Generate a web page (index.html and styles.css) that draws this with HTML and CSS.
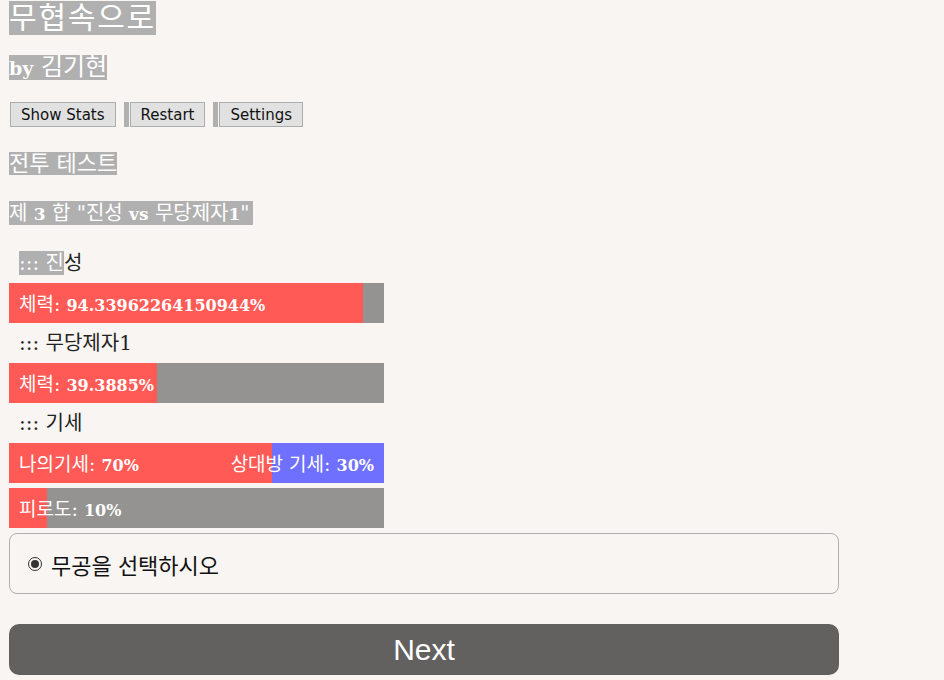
FILE: index.html
```html
<!DOCTYPE html>
<html lang="ko">
<head>
    <meta charset="UTF-8">
    <meta name="viewport" content="width=device-width, initial-scale=1.0">
    <title>무협속으로</title>
    <link rel="stylesheet" href="styles.css">
</head>
<body>
    <div class="game">
        <h1 class="title"><span class="hl">무협속으로</span></h1>
        <h3 class="author"><span class="hl"><b>by</b> 김기현</span></h3>

        <div class="toolbar">
            <button class="tool-btn">Show Stats</button>
            <span class="sep"></span>
            <button class="tool-btn">Restart</button>
            <span class="sep"></span>
            <button class="tool-btn">Settings</button>
        </div>

        <div class="scene"><span class="hl">전투 테스트</span></div>
        <div class="round"><span class="hl">제 <b>3</b> 합 "진성 <b>vs</b> 무당제자<b>1</b>"</span></div>

        <div class="who first"><span class="hl">::: 진</span>성</div>
        <div class="bar">
            <div class="bar-fill red" style="width: 94.34%"></div>
            <div class="bar-label"><span>체력: <b>94.33962264150944%</b></span></div>
        </div>

        <div class="who">::: 무당제자1</div>
        <div class="bar">
            <div class="bar-fill red" style="width: 39.39%"></div>
            <div class="bar-label"><span>체력: <b>39.3885%</b></span></div>
        </div>

        <div class="who">::: 기세</div>
        <div class="bar blue">
            <div class="bar-fill red" style="width: 70%"></div>
            <div class="bar-label"><span>나의기세: <b>70%</b></span><span>상대방 기세: <b>30%</b></span></div>
        </div>
        <div class="bar gap">
            <div class="bar-fill red" style="width: 10%"></div>
            <div class="bar-label"><span>피로도: <b>10%</b></span></div>
        </div>

        <div class="choices">
            <label class="choice"><span class="radio"></span>무공을 선택하시오</label>
        </div>

        <button class="next-btn">Next</button>
    </div>
</body>
</html>
```

FILE: styles.css
```css
body {
    margin: 0;
    padding: 0 9px;
    background-color: #f8f5f2;
    color: #222;
    font-family: "DejaVu Serif", "Noto Sans CJK KR", serif;
}
.game {
    width: 830px;
}
.hl {
    background-color: #b0b0b0;
    color: #fff;
}
.title {
    margin: 0;
    padding-top: 1px;
    font-weight: normal;
    font-size: 30px;
    line-height: 34px;
    height: 34px;
}
.title .hl {
    display: inline-block;
    height: 34px;
    letter-spacing: 1.8px;
}
.author {
    margin: 20px 0 0;
    font-weight: normal;
    font-size: 24px;
    line-height: 25px;
    height: 25px;
}
.author .hl {
    display: inline-block;
    height: 25px;
}
.author b {
    font-size: 19px;
}
.toolbar {
    display: flex;
    align-items: center;
    margin-top: 22px;
    height: 25px;
}
.tool-btn {
    height: 25px;
    margin: 0 0 0 1px;
    padding: 0 10px;
    font-family: "DejaVu Sans", sans-serif;
    font-size: 15px;
    color: #111;
    background: #e1e1e1;
    border: 1px solid #adadad;
    border-radius: 0;
}
.sep {
    display: inline-block;
    width: 5px;
    height: 25px;
    margin-left: 8px;
    background: #b0b0b0;
}
.scene {
    margin-top: 25px;
    font-size: 22px;
    line-height: 23px;
}
.scene .hl {
    display: inline-block;
    height: 23px;
}
.round {
    margin-top: 26px;
    font-size: 20px;
    line-height: 24px;
}
.round .hl {
    display: inline-block;
    height: 24px;
    padding-right: 3px;
}
.round b {
    font-size: 17px;
}
.who {
    height: 40px;
    line-height: 40px;
    padding-left: 10px;
    font-size: 20px;
}
.who.first {
    margin-top: 18px;
}
.bar {
    position: relative;
    width: 375px;
    height: 40px;
    background: #949391;
}
.bar.blue {
    background: #7070ff;
}
.bar.gap {
    margin-top: 5px;
}
.bar-fill {
    height: 100%;
}
.bar-fill.red {
    background: #ff5a55;
}
.bar-label {
    position: absolute;
    inset: 0;
    display: flex;
    align-items: center;
    justify-content: space-between;
    padding: 0 10px 2px;
    color: #fff;
    font-size: 19px;
    white-space: nowrap;
}
.bar-label b {
    font-size: 16px;
}
.choices {
    margin-top: 5px;
    height: 59px;
    border: 1px solid #b0b0b0;
    border-radius: 8px;
    display: flex;
    align-items: center;
    padding-left: 18px;
}
.choice {
    display: flex;
    align-items: center;
    font-family: "Noto Sans CJK KR", sans-serif;
    font-size: 22px;
    color: #111;
}
.radio {
    width: 12px;
    height: 12px;
    border: 1px solid #333;
    border-radius: 50%;
    margin-right: 9px;
    position: relative;
}
.radio::after {
    content: "";
    position: absolute;
    left: 2px;
    top: 2px;
    width: 8px;
    height: 8px;
    border-radius: 50%;
    background: #333;
}
.next-btn {
    display: block;
    width: 830px;
    height: 51px;
    margin-top: 30px;
    border: none;
    border-radius: 10px;
    background: #63615f;
    color: #fff;
    font-family: "Liberation Sans Narrow", "Liberation Sans", sans-serif;
    font-size: 30px;
}
```
